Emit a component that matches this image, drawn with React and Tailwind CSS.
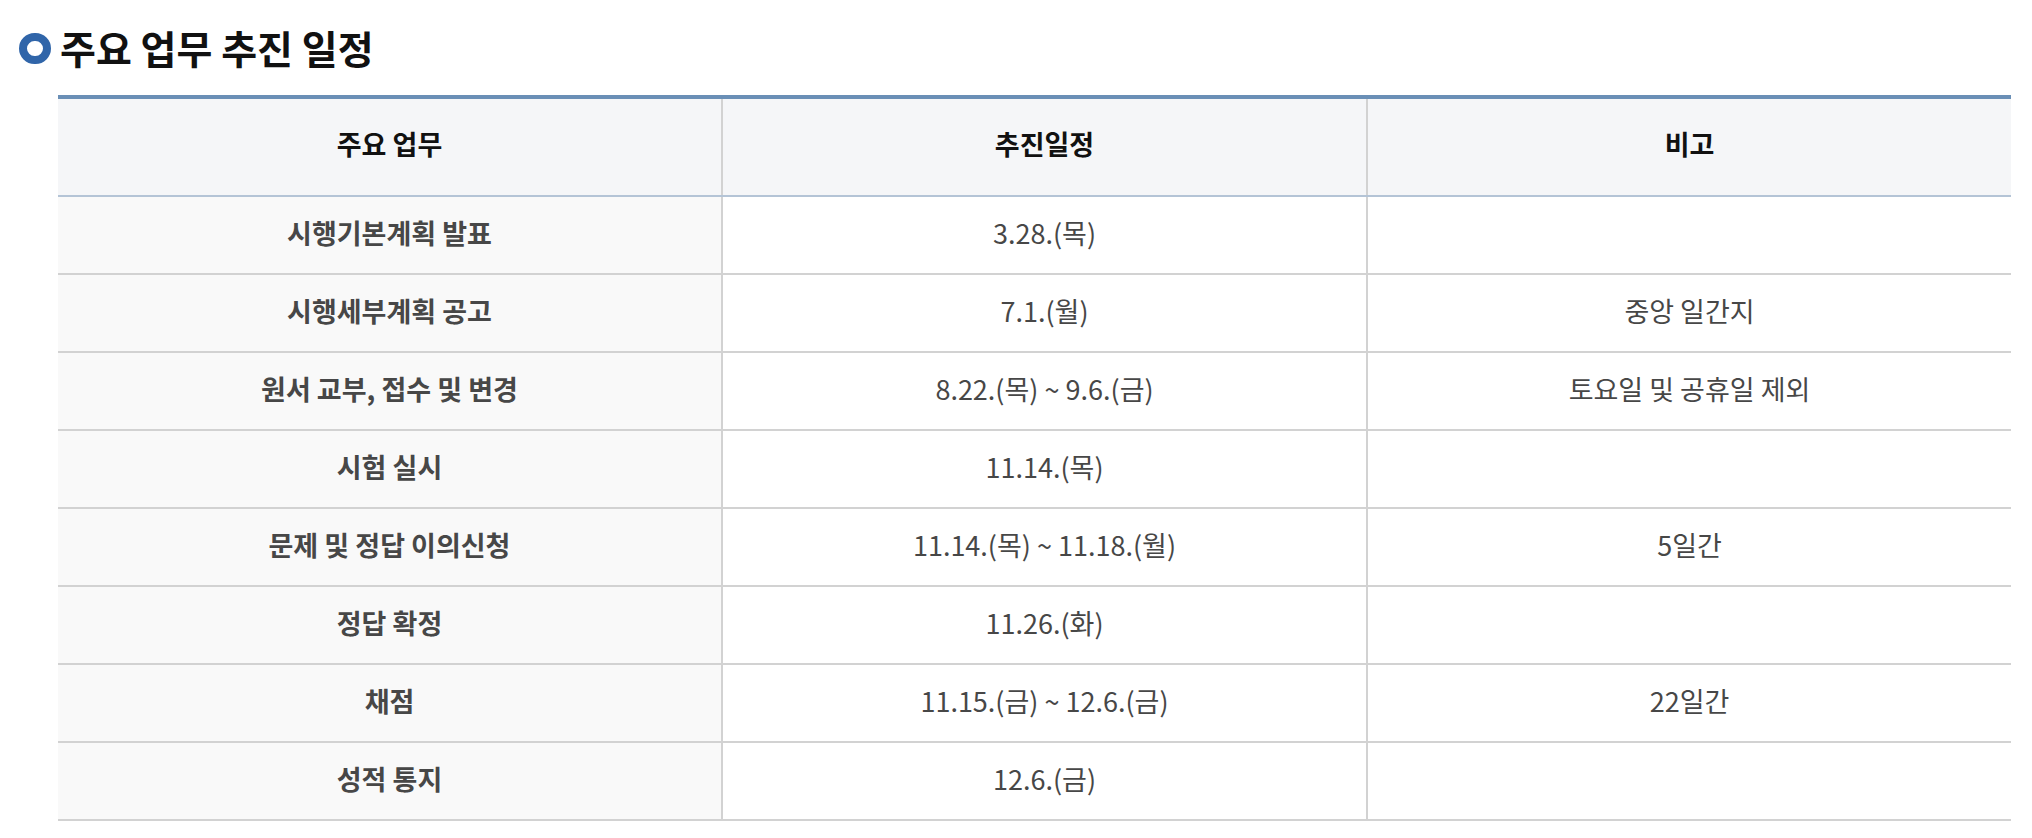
import React from "react";

const rows = [
  ["시행기본계획 발표", "3.28.(목)", ""],
  ["시행세부계획 공고", "7.1.(월)", "중앙 일간지"],
  ["원서 교부, 접수 및 변경", "8.22.(목) ~ 9.6.(금)", "토요일 및 공휴일 제외"],
  ["시험 실시", "11.14.(목)", ""],
  ["문제 및 정답 이의신청", "11.14.(목) ~ 11.18.(월)", "5일간"],
  ["정답 확정", "11.26.(화)", ""],
  ["채점", "11.15.(금) ~ 12.6.(금)", "22일간"],
  ["성적 통지", "12.6.(금)", ""],
];

export default function App() {
  return (
    <div className="w-[2032px] h-[838px] bg-white font-['Noto_Sans_CJK_KR',sans-serif] overflow-hidden">
      <div className="flex items-center pl-[19px] pt-[22px] h-[71px] gap-[9px]">
        <span className="block w-[32px] h-[31px] rounded-full border-[8px] border-[#3065a9] mt-[4px]" />
        <h2 className="text-[39px] leading-[46px] font-bold text-[#111]">주요 업무 추진 일정</h2>
      </div>
      <div className="ml-[58px] w-[1953px] mt-[24px] border-t-4 border-[#6a8fb6]">
        <div className="grid grid-cols-[665px_645px_643px] h-[98px] bg-[#f5f6f8] border-b-2 border-[#b4c4d6]">
          <div className="flex items-center justify-center border-r-2 border-[#d2d2d2] text-[27px] font-bold text-[#111] pb-[6px]">주요 업무</div>
          <div className="flex items-center justify-center border-r-2 border-[#d2d2d2] text-[27px] font-bold text-[#111] pb-[6px]">추진일정</div>
          <div className="flex items-center justify-center text-[27px] font-bold text-[#111] pb-[6px]">비고</div>
        </div>
        {rows.map((r, i) => (
          <div key={i} className="grid grid-cols-[665px_645px_643px] h-[78px] border-b-2 border-[#d2d2d2]">
            <div className="flex items-center justify-center bg-[#f9f9f9] border-r-2 border-[#d2d2d2] text-[27px] font-bold text-[#474747] pb-[4px]">{r[0]}</div>
            <div className="flex items-center justify-center border-r-2 border-[#d2d2d2] text-[27px] text-[#474747] pb-[4px]">{r[1]}</div>
            <div className="flex items-center justify-center text-[27px] text-[#474747] pb-[4px]">{r[2]}</div>
          </div>
        ))}
      </div>
    </div>
  );
}
